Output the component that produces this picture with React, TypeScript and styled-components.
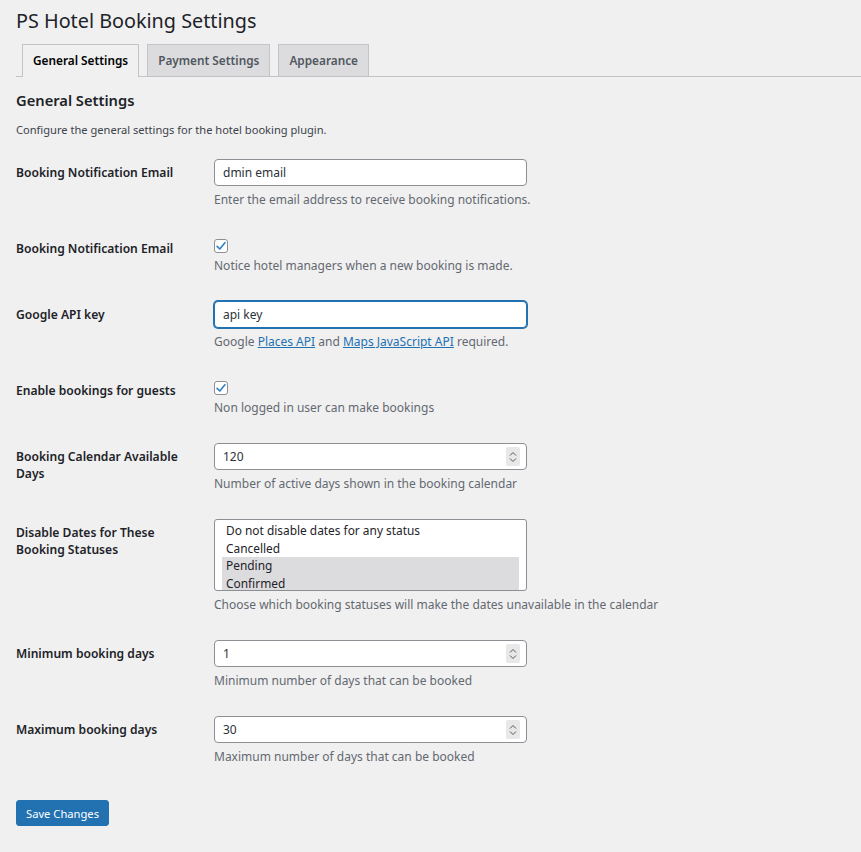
import React from "react";
import styled, { createGlobalStyle } from "styled-components";

const GlobalStyle = createGlobalStyle`
  body {
    margin: 0;
    background: #f0f0f1;
    font-family: "Noto Sans", "Open Sans", sans-serif;
    color: #1d2327;
    font-size: 12px;
  }
`;

const Wrap = styled.div`
  padding: 0 0 24px 16px;
`;

const Title = styled.h1`
  margin: 0;
  padding: 7px 0 4px;
  font-size: 19.8px;
  font-weight: 400;
  line-height: 27px;
  color: #1d2327;
`;

const TabBar = styled.nav`
  display: flex;
  align-items: flex-end;
  border-bottom: 1px solid #c3c4c7;
  padding-left: 6px;
  gap: 8px;
  margin-top: 6px;
`;

const Tab = styled.a<{ $active?: boolean }>`
  display: block;
  padding: 5px 10px;
  font-size: 11.8px;
  font-weight: 600;
  line-height: 20px;
  border: 1px solid #c3c4c7;
  border-bottom: none;
  margin-bottom: ${(p) => (p.$active ? "-1px" : "0")};
  padding-bottom: ${(p) => (p.$active ? "7px" : "6px")};
  background: ${(p) => (p.$active ? "#f0f0f1" : "#dcdcde")};
  color: ${(p) => (p.$active ? "#000" : "#50575e")};
  text-decoration: none;
`;

const SectionTitle = styled.h2`
  margin: 13px 0 0;
  font-size: 14.7px;
  font-weight: 600;
  line-height: 20px;
  color: #1d2327;
`;

const Intro = styled.p`
  margin: 12px 0 6px;
  font-size: 11.1px;
  line-height: 16px;
  color: #3c434a;
`;

const Row = styled.div`
  display: grid;
  grid-template-columns: 198px 1fr;
`;

const Label = styled.div`
  padding: 20px 10px 13px 0;
  font-size: 12.1px;
  font-weight: 600;
  line-height: 17px;
  color: #1d2327;
`;

const Field = styled.div`
  padding: 15px 0 12px;
`;

const TextInput = styled.div<{ $focus?: boolean }>`
  box-sizing: border-box;
  width: 313px;
  height: 27px;
  display: flex;
  align-items: center;
  padding: 0 8px;
  background: #fff;
  border: 1px solid ${(p) => (p.$focus ? "#2271b1" : "#8c8f94")};
  box-shadow: ${(p) => (p.$focus ? "0 0 0 1px #2271b1" : "none")};
  border-radius: 4px;
  font-size: 12px;
  color: #2c3338;
`;

const Value = styled.span`
  flex: 1;
`;

const Spinner = styled.span`
  width: 14px;
  height: 19px;
  background: #e8e8e8;
  border-radius: 2px;
  display: flex;
  align-items: center;
  justify-content: center;
  margin-right: -2px;
`;

const Description = styled.p<{ $afterCheck?: boolean }>`
  margin: ${(p) => (p.$afterCheck ? "5px" : "6px")} 0 0;
  font-size: 12px;
  line-height: 16px;
  color: #646970;
`;

const Link = styled.a`
  color: #2271b1;
  text-decoration: underline;
`;

const Checkbox = styled.span`
  box-sizing: border-box;
  display: flex;
  align-items: center;
  justify-content: center;
  width: 14px;
  height: 14px;
  margin-top: 4px;
  background: #fff;
  border: 1px solid #8c8f94;
  border-radius: 3px;
`;

const MultiSelect = styled.div`
  box-sizing: border-box;
  width: 313px;
  height: 72px;
  padding: 2px 7px;
  background: #fff;
  border: 1px solid #8c8f94;
  border-radius: 3px;
  overflow: hidden;
`;

const Option = styled.div<{ $selected?: boolean }>`
  padding: 0 4px;
  font-size: 11.9px;
  line-height: 17.5px;
  color: #1d2327;
  background: ${(p) => (p.$selected ? "#dcdcde" : "transparent")};
`;

const SaveButton = styled.button`
  margin-top: 23px;
  height: 26px;
  padding: 0 9px;
  background: #2271b1;
  border: 1px solid #2271b1;
  border-radius: 3px;
  color: #fff;
  font-family: inherit;
  font-size: 11.2px;
`;

const Check = () => (
  <svg width="12" height="12" viewBox="0 0 20 20">
    <path d="M3.5 10.5 L8 15 L16.5 4.5" fill="none" stroke="#3582c4" strokeWidth="2.8" strokeLinecap="round" strokeLinejoin="round" />
  </svg>
);

const Arrows = () => (
  <svg width="8" height="12" viewBox="0 0 8 12">
    <path d="M1 4.5 L4 1.5 L7 4.5 M1 7.5 L4 10.5 L7 7.5" fill="none" stroke="#50575e" strokeWidth="1" />
  </svg>
);

const NumberField = ({ value }: { value: string }) => (
  <TextInput>
    <Value>{value}</Value>
    <Spinner>
      <Arrows />
    </Spinner>
  </TextInput>
);

export default function App() {
  return (
    <Wrap>
      <GlobalStyle />
      <Title>PS Hotel Booking Settings</Title>
      <TabBar>
        <Tab $active>General Settings</Tab>
        <Tab>Payment Settings</Tab>
        <Tab>Appearance</Tab>
      </TabBar>
      <SectionTitle>General Settings</SectionTitle>
      <Intro>Configure the general settings for the hotel booking plugin.</Intro>

      <Row>
        <Label>Booking Notification Email</Label>
        <Field>
          <TextInput>dmin email</TextInput>
          <Description>Enter the email address to receive booking notifications.</Description>
        </Field>
      </Row>
      <Row>
        <Label>Booking Notification Email</Label>
        <Field>
          <Checkbox>
            <Check />
          </Checkbox>
          <Description $afterCheck>Notice hotel managers when a new booking is made.</Description>
        </Field>
      </Row>
      <Row>
        <Label>Google API key</Label>
        <Field>
          <TextInput $focus>api key</TextInput>
          <Description>
            Google <Link>Places API</Link> and <Link>Maps JavaScript API</Link> required.
          </Description>
        </Field>
      </Row>
      <Row>
        <Label>Enable bookings for guests</Label>
        <Field>
          <Checkbox>
            <Check />
          </Checkbox>
          <Description $afterCheck>Non logged in user can make bookings</Description>
        </Field>
      </Row>
      <Row>
        <Label>Booking Calendar Available Days</Label>
        <Field>
          <NumberField value="120" />
          <Description>Number of active days shown in the booking calendar</Description>
        </Field>
      </Row>
      <Row>
        <Label>Disable Dates for These Booking Statuses</Label>
        <Field>
          <MultiSelect>
            <Option>Do not disable dates for any status</Option>
            <Option>Cancelled</Option>
            <Option $selected>Pending</Option>
            <Option $selected>Confirmed</Option>
          </MultiSelect>
          <Description>Choose which booking statuses will make the dates unavailable in the calendar</Description>
        </Field>
      </Row>
      <Row>
        <Label>Minimum booking days</Label>
        <Field>
          <NumberField value="1" />
          <Description>Minimum number of days that can be booked</Description>
        </Field>
      </Row>
      <Row>
        <Label>Maximum booking days</Label>
        <Field>
          <NumberField value="30" />
          <Description>Maximum number of days that can be booked</Description>
        </Field>
      </Row>
      <SaveButton>Save Changes</SaveButton>
    </Wrap>
  );
}
